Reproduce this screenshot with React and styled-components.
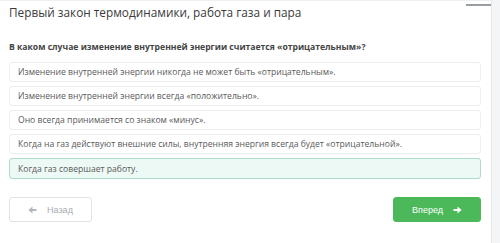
import React from "react";
import styled, { createGlobalStyle } from "styled-components";

const Global = createGlobalStyle`
  html, body { margin: 0; padding: 0; background: #f4f5f6; }
  body { font-family: "Open Sans", "Noto Sans", sans-serif; }
`;

const Page = styled.div`
  display: flex;
  width: 500px;
  height: 243px;
  overflow: hidden;
`;

const Panel = styled.div`
  width: 492px;
  height: 243px;
  background: #fff;
  border-right: 1px solid #e6e8ea;
  box-sizing: border-box;
  display: flex;
  flex-direction: column;
`;

const TopStrip = styled.div`
  display: flex;
  justify-content: flex-end;
  height: 3px;
  border-top: 1px solid #eef0f1;
`;

const TopMark = styled.div`
  width: 25px;
  height: 2px;
  margin-top: 3px;
  background: #9a9ea2;
`;

const Content = styled.div`
  padding: 0 10px 0 9px;
  display: flex;
  flex-direction: column;
`;

const Title = styled.h1`
  margin: 0;
  font-size: 11.8px;
  font-weight: 400;
  line-height: 16px;
  color: #3a3a3a;
`;

const Question = styled.h2`
  margin: 21px 0 0;
  font-size: 8.6px;
  font-weight: 700;
  line-height: 12px;
  color: #444;
`;

const Options = styled.div`
  margin-top: 9px;
  display: flex;
  flex-direction: column;
  gap: 4px;
`;

const Option = styled.div`
  height: ${(p) => (p.$selected ? "21px" : "20px")};
  box-sizing: border-box;
  display: flex;
  align-items: center;
  padding-left: 8px;
  border-radius: 3px;
  font-size: 8.6px;
  color: #5a5a5a;
  background: ${(p) => (p.$selected ? "#edf9f4" : "#fff")};
  border: 1px solid ${(p) => (p.$selected ? "#addacb" : "#eceeef")};
  white-space: nowrap;
`;

const Footer = styled.div`
  margin-top: 18px;
  display: flex;
  justify-content: space-between;
`;

const Button = styled.div`
  height: 25px;
  width: ${(p) => p.$w}px;
  box-sizing: border-box;
  border-radius: 3px;
  display: flex;
  align-items: center;
  justify-content: center;
  gap: 10px;
  font-family: "Liberation Sans", Arial, sans-serif;
  font-size: 9px;
  ${(p) =>
    p.$primary
      ? `background: #4bb95a; color: #fff; border: 1px solid #4bb95a;`
      : `background: #fff; color: #a9adb1; border: 1px solid #e1e3e5;`}
`;

const Arrow = ({ dir, color }) => (
  <svg width="9" height="8" viewBox="0 0 9 8" style={{ transform: dir === "left" ? "scaleX(-1)" : "none" }}>
    <path d="M0.5 3 H4.5 V0.6 L8.6 4 L4.5 7.4 V5 H0.5 Z" fill={color} />
  </svg>
);

const options = [
  "Изменение внутренней энергии никогда не может быть «отрицательным».",
  "Изменение внутренней энергии всегда «положительно».",
  "Оно всегда принимается со знаком «минус».",
  "Когда на газ действуют внешние силы, внутренняя энергия всегда будет «отрицательной».",
  "Когда газ совершает работу.",
];

export default function App() {
  return (
    <>
      <Global />
      <Page>
        <Panel>
          <TopStrip>
            <TopMark />
          </TopStrip>
          <Content>
            <Title>Первый закон термодинамики, работа газа и пара</Title>
            <Question>В каком случае изменение внутренней энергии считается «отрицательным»?</Question>
            <Options>
              {options.map((o, i) => (
                <Option key={i} $selected={i === 4}>{o}</Option>
              ))}
            </Options>
            <Footer>
              <Button $w={83}>
                <Arrow dir="left" color="#b3b7bb" />
                Назад
              </Button>
              <Button $w={88} $primary>
                Вперед
                <Arrow dir="right" color="#fff" />
              </Button>
            </Footer>
          </Content>
        </Panel>
      </Page>
    </>
  );
}
